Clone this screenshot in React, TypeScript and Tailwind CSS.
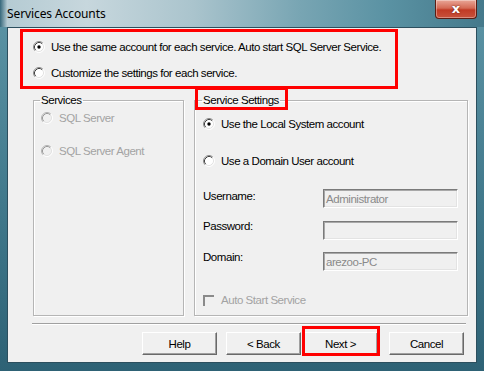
import React from "react";

const F = "font-['Liberation_Sans',Arial,sans-serif] text-[11.5px] tracking-[-0.45px] leading-[14px] whitespace-nowrap";

function Radio({ checked = false, disabled = false }: { checked?: boolean; disabled?: boolean }) {
  return (
    <svg width="12" height="12" viewBox="0 0 12 12" className="shrink-0">
      <circle cx="6" cy="6" r="5" fill={disabled ? "#f0f0f0" : "#ffffff"} />
      <path d="M9.89 2.11 A5.5 5.5 0 0 0 2.11 9.89" fill="none" stroke={disabled ? "#b4b4b4" : "#8c8c8c"} strokeWidth="1" />
      <path d="M9.18 2.82 A4.5 4.5 0 0 0 2.82 9.18" fill="none" stroke={disabled ? "#9a9a9a" : "#404040"} strokeWidth="1" />
      <path d="M2.11 9.89 A5.5 5.5 0 0 0 9.89 2.11" fill="none" stroke="#ffffff" strokeWidth="1" />
      <path d="M2.82 9.18 A4.5 4.5 0 0 0 9.18 2.82" fill="none" stroke="#e3e3e3" strokeWidth="1" />
      {checked && <circle cx="6" cy="6" r="1.7" fill="#000000" />}
    </svg>
  );
}

function Btn({ label }: { label: string }) {
  return (
    <div
      className={`${F} w-[75px] h-[23px] flex items-center justify-center bg-[#f0f0f0] border border-t-white border-l-white border-r-[#696969] border-b-[#696969] shadow-[inset_-1px_-1px_0_#a0a0a0] text-black`}
    >
      {label}
    </div>
  );
}

function Field({ value }: { value: string }) {
  return (
    <div
      className={`${F} w-[135px] h-[19px] ml-auto mr-[9px] bg-[#f0f0f0] border border-t-[#7a7a7a] border-l-[#7a7a7a] border-r-white border-b-white shadow-[inset_1px_1px_0_#a8a8a8,inset_-1px_-1px_0_#e3e3e3] text-[#8a8a8a] pl-[2px] pt-[2px]`}
    >
      {value}
    </div>
  );
}

export default function App() {
  return (
    <div className="w-[484px] h-[371px] flex flex-col bg-[linear-gradient(180deg,#5d95a6_0%,#3e7689_60%,#2e6275_100%)] overflow-hidden">
      {/* Title bar */}
      <div className="relative h-[27px] shrink-0 flex items-center bg-[linear-gradient(90deg,#36687b_0%,#b5cbd3_1.5%,#c7d7dd_18%,#aac4cd_40%,#78a5b3_62%,#5a92a3_80%,#45798b_100%)]">
        <span className="ml-[7px] mt-[1px] font-['Noto_Sans',Arial,sans-serif] text-[12px] tracking-[-0.1px] text-black">
          Services Accounts
        </span>
        <div className="absolute left-[435px] top-0 w-[42px] h-[19px] rounded-b-[4px] border border-t-0 border-[#5b1d14] bg-[linear-gradient(180deg,#e9a697_0%,#d46a55_45%,#c13a25_55%,#c8523c_100%)] flex items-center justify-center shadow-[inset_0_0_0_1px_rgba(255,255,255,0.35)]">
          <span className="font-['DejaVu_Sans',sans-serif] font-bold text-[13px] leading-none text-white [text-shadow:0_0_2px_#5b1d14] -mt-[1px]">
            x
          </span>
        </div>
      </div>

      {/* Client area */}
      <div className="flex-1 mx-[7px] mb-[8px] border border-[#2c4f5e] bg-[#f0f0f0] flex flex-col">
        {/* Top radios (annotated) */}
        <div className="ml-[12px] mt-[1px] w-[378px] h-[60px] border-[3px] border-[#ff0000] flex flex-col pl-[10px] pt-[5px] gap-[6px]">
          <div className={`${F} h-[20px] flex items-center gap-[6px] text-black`}>
            <Radio checked />
            <span>Use the same account for each service. Auto start SQL Server Service.</span>
          </div>
          <div className={`${F} h-[20px] flex items-center gap-[6px] text-black`}>
            <Radio />
            <span>Customize the settings for each service.</span>
          </div>
        </div>

        {/* Group boxes */}
        <div className="flex mt-[4px] ml-[25px] gap-[10px] h-[223px]">
          <fieldset className="w-[151px] h-full border border-[#b5b5b5] shadow-[inset_1px_1px_0_#ffffff,1px_1px_0_#ffffff]">
            <legend className={`${F} ml-[6px] px-[1px] text-black`}>Services</legend>
            <div className="flex flex-col pl-[7px] pt-[3px] gap-[17px]">
              <div className={`${F} h-[16px] flex items-center gap-[6px] text-[#a3a3a3]`}>
                <Radio disabled />
                <span>SQL Server</span>
              </div>
              <div className={`${F} h-[16px] flex items-center gap-[6px] text-[#a3a3a3]`}>
                <Radio disabled />
                <span>SQL Server Agent</span>
              </div>
            </div>
          </fieldset>

          <fieldset className="relative w-[274px] h-full border border-[#b5b5b5] shadow-[inset_1px_1px_0_#ffffff,1px_1px_0_#ffffff]">
            <legend className={`${F} ml-[7px] px-[1px] text-black`}>Service Settings</legend>
            <div className="absolute left-[0px] top-[-20px] w-[93px] h-[23px] border-[3px] border-[#ff0000]" />
            <div className="flex flex-col pl-[8px]">
              <div className={`${F} mt-[9px] h-[16px] flex items-center gap-[6px] text-black`}>
                <Radio checked />
                <span>Use the Local System account</span>
              </div>
              <div className={`${F} mt-[21px] h-[16px] flex items-center gap-[6px] text-black`}>
                <Radio />
                <span>Use a Domain User account</span>
              </div>
              <div className="mt-[20px] flex items-start">
                <span className={`${F} text-black`}>Username:</span>
                <Field value="Administrator" />
              </div>
              <div className="mt-[13px] flex items-start">
                <span className={`${F} text-black -mt-[2px]`}>Password:</span>
                <Field value="" />
              </div>
              <div className="mt-[12px] flex items-start">
                <span className={`${F} text-black -mt-[2px]`}>Domain:</span>
                <Field value="arezoo-PC" />
              </div>
              <div className={`${F} mt-[21px] h-[16px] flex items-center gap-[7px] text-[#a3a3a3]`}>
                <div className="w-[11px] h-[11px] border-t-2 border-l-2 border-t-[#8a8a8a] border-l-[#8a8a8a] bg-[#f0f0f0]" />
                <span>Auto Start Service</span>
              </div>
            </div>
          </fieldset>
        </div>

        {/* Separator */}
        <div className="ml-[24px] mt-[7px] w-[434px] h-[2px] border-t border-t-[#a0a0a0] border-b border-b-white" />

        {/* Buttons */}
        <div className="flex mt-[7px] ml-[134px]">
          <Btn label="Help" />
          <div className="ml-[9px]">
            <Btn label="< Back" />
          </div>
          <div className="relative ml-[2px]">
            <Btn label="Next >" />
            <div className="absolute left-[-1px] top-[-6px] w-[78px] h-[30px] border-[3px] border-[#ff0000]" />
          </div>
          <div className="ml-[11px]">
            <Btn label="Cancel" />
          </div>
        </div>
      </div>
    </div>
  );
}
